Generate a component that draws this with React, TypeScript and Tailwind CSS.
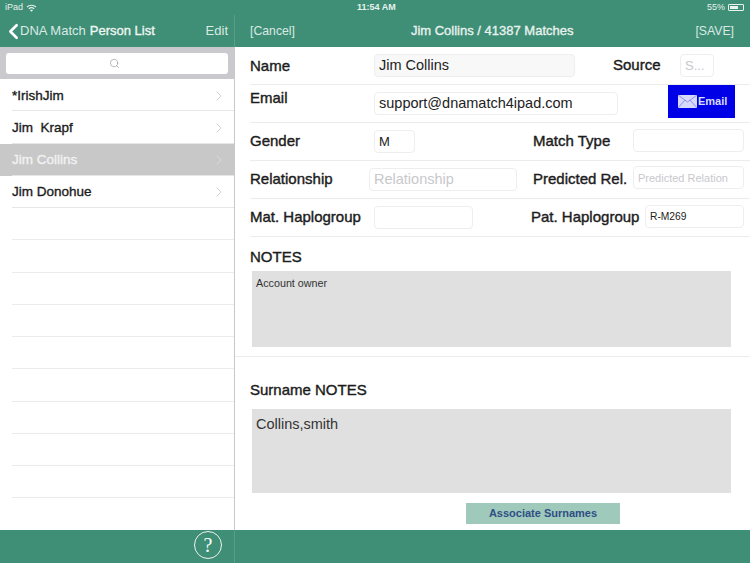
import React from "react";
import { ChevronLeft, ChevronRight, Search } from "lucide-react";

function Field({ w, h = "h-[23px]", text, placeholder, size = "text-[14.5px]", cls = "" }: { w: string; h?: string; text?: string; placeholder?: string; size?: string; cls?: string }) {
  return (
    <div className={`${w} ${h} ${size} ${cls} shrink-0 flex items-center px-[4px] rounded-[4px] border border-[#eeeeee] whitespace-nowrap overflow-hidden`}>
      {text ? <span className="text-[#222222]">{text}</span> : <span className="text-[#c8c8cc]">{placeholder}</span>}
    </div>
  );
}

function Label({ children, cls = "" }: { children: React.ReactNode; cls?: string }) {
  return <div className={`text-[15px] [-webkit-text-stroke:0.4px_#1c1c1c] text-[#1c1c1c] whitespace-nowrap shrink-0 ${cls}`}>{children}</div>;
}

const people = ["*IrishJim", "Jim  Krapf", "Jim Collins", "Jim Donohue"];

export default function App() {
  return (
    <div className="w-[750px] h-[563px] overflow-hidden flex flex-col bg-white font-['Liberation_Sans',sans-serif]">
      <div className="h-[47px] shrink-0 bg-[#3f8e76] text-white flex flex-col">
        <div className="h-[15px] flex items-center justify-between px-[5px] text-[9px] text-[#e8f2ee] relative">
          <div className="flex items-center gap-[3px]">
            <span>iPad</span>
            <svg width="11" height="8" viewBox="0 0 11 8" fill="none" stroke="#e8f2ee">
              <path d="M1 3c2.500-2.300 6.500-2.300 9 0" strokeWidth="1.100" />
              <path d="M2.800 4.800c1.500-1.300 3.900-1.300 5.400 0" strokeWidth="1.100" />
              <path d="M5.500 7.800L4 6.200c.8-.6 2.200-.6 3 0z" fill="#e8f2ee" stroke="none" />
            </svg>
          </div>
          <div className="absolute left-[357px] font-bold">11:54 AM</div>
          <div className="flex items-center gap-[3px]">
            <span>55%</span>
            <div className="w-[16px] h-[7px] border border-[#e8f2ee] rounded-[1px] p-px mr-px">
              <div className="w-[8px] h-full bg-[#e8f2ee]" />
            </div>
          </div>
        </div>
        <div className="flex-1 flex">
          <div className="w-[235px] shrink-0 flex items-center pl-[1px] pr-[6px] text-[13px] border-r border-[#5a9e89]">
            <ChevronLeft size={25} strokeWidth={2.500} className="-mr-[6px] shrink-0" />
            <span className="text-[#d9eae4]">DNA Match</span>
            <span className="ml-[4px] text-[13px] text-[#eef6f3] [-webkit-text-stroke:0.35px_#eef6f3]">Person List</span>
            <span className="ml-auto text-[#d9eae4]">Edit</span>
          </div>
          <div className="flex-1 flex items-center justify-between pl-[15px] pr-[16px] text-[12.25px] text-[#d9eae4]">
            <span>[Cancel]</span>
            <span className="text-[13px] text-[#e8f2ee] mr-[6px] [-webkit-text-stroke:0.35px_#e8f2ee]">Jim Collins / 41387 Matches</span>
            <span>[SAVE]</span>
          </div>
        </div>
      </div>

      <div className="flex-1 flex min-h-0">
        <div className="w-[234px] shrink-0 flex flex-col">
          <div className="h-[32px] bg-[#c9c9ce] px-[6px] py-[6px] shrink-0">
            <div className="h-[21px] bg-white rounded-[3px] flex items-center justify-center">
              <Search size={11} strokeWidth={1.300} className="text-[#8e8e93] mr-[6px]" />
            </div>
          </div>
          {people.map((p, i) => (
            <div key={p} className={`h-[32.250px] shrink-0 pl-[12px] ${i === 2 ? "bg-[#c8c8c8]" : ""}`}>
              <div className={`h-full flex items-center pr-[7px] ${i === 2 ? "pt-[1px]" : "pt-[2px]"} text-[13.5px] border-b border-[#e6e6e6] ${i === 2 ? "text-[#f2f2f2] [-webkit-text-stroke:0.35px_#f2f2f2]" : "text-[#1c1c1c] [-webkit-text-stroke:0.35px_#1c1c1c]"}`}>
                <span className="whitespace-pre">{p}</span>
                <ChevronRight size={16} strokeWidth={1.300} className={`ml-auto ${i === 2 ? "text-[#dddddd]" : "text-[#c7c7cc]"}`} />
              </div>
            </div>
          ))}
          <div className="pl-[12px] flex flex-col">
            {Array.from({ length: 9 }).map((_, i) => (
              <div key={i} className="h-[32.250px] border-b border-[#ececec]" />
            ))}
          </div>
        </div>

        <div className="flex-1 border-l border-[#c8c8c8] flex flex-col min-w-0">
          <div className="pl-[15px] flex flex-col">
            <div className="h-[38px] flex items-center border-b border-[#ececec]">
              <Label cls="w-[124px] mt-[1px]">Name</Label>
              <Field w="w-[201px]" text="Jim Collins" cls="bg-[#f8f8f8]" />
              <Label cls="ml-[38px] w-[67px]">Source</Label>
              <Field w="w-[34px]" placeholder="S..." size="text-[13px]" />
            </div>
            <div className="h-[38px] flex items-center border-b border-[#ececec]">
              <Label cls="w-[124px] -mt-[11px]">Email</Label>
              <Field w="w-[244px]" text="support@dnamatch4ipad.com" />
              <div className="ml-[50px] w-[67px] h-[33px] -mt-[4px] bg-[#0000e6] flex items-center pl-[10px] gap-0 text-[11px] font-bold text-[#dcdcff]">
                <svg width="19" height="13" viewBox="0 0 19 13">
                  <rect width="19" height="13" fill="#d8d8fa" />
                  <path d="M0 0l9.500 7L19 0M0 13l7-8M19 13l-7-8" fill="none" stroke="#8f8ff0" strokeWidth="1" />
                </svg>
                <span className="ml-[1px]">Email</span>
              </div>
            </div>
            <div className="h-[38px] flex items-center border-b border-[#ececec]">
              <Label cls="w-[124px]">Gender</Label>
              <Field w="w-[41px]" text="M" size="text-[13px]" />
              <Label cls="ml-[118px] w-[100px] -mt-[1px]">Match Type</Label>
              <Field w="w-[111px]" cls="-mt-[2px]" />
            </div>
            <div className="h-[38px] flex items-center border-b border-[#ececec]">
              <Label cls="w-[119px]">Relationship</Label>
              <Field w="w-[148px]" placeholder="Relationship" />
              <Label cls="ml-[16px] w-[100px] -mt-[1px]">Predicted Rel.</Label>
              <Field w="w-[111px]" placeholder="Predicted Relation" size="text-[11px]" cls="-mt-[4px] pt-[1px]" />
            </div>
            <div className="h-[38px] flex items-center border-b border-[#ececec]">
              <Label cls="w-[124px]">Mat. Haplogroup</Label>
              <Field w="w-[99px]" />
              <Label cls="ml-[58px] w-[114px] -mt-[1px]">Pat. Haplogroup</Label>
              <Field w="w-[99px]" text="R-M269" size="text-[10.25px]" cls="-mt-[2px] pt-[1px]" />
            </div>
          </div>

          <div className="pl-[15px] pt-[11px]">
            <Label cls="leading-[17px]">NOTES</Label>
          </div>
          <div className="ml-[17px] mt-[6px] w-[479px] h-[76px] bg-[#e0e0e0] px-[4px] py-[4px] text-[10.75px] text-[#333333]">Account owner</div>
          <div className="mt-[9px] border-b border-[#ececec]" />
          <div className="pl-[15px] pt-[24px]">
            <Label cls="leading-[17px]">Surname NOTES</Label>
          </div>
          <div className="ml-[17px] mt-[11px] w-[479px] h-[84px] bg-[#e0e0e0] px-[4px] py-[5px] text-[14.5px] text-[#333333]">Collins,smith</div>
          <div className="ml-[231px] mt-[10px] w-[154px] h-[21px] bg-[#9fc9ba] flex items-center justify-center text-[11px] font-bold text-[#2f4f86]">Associate Surnames</div>
        </div>
      </div>

      <div className="h-[33px] shrink-0 bg-[#3f8e76] flex">
        <div className="w-[235px] flex items-center justify-end pr-[12px] border-r border-[#5a9e89]">
          <div className="w-[28px] h-[28px] -mt-[3px] rounded-full border-[1.5px] border-[#f2f2f2] flex items-center justify-center text-white text-[20px] font-['Liberation_Serif',serif]">?</div>
        </div>
      </div>
    </div>
  );
}
